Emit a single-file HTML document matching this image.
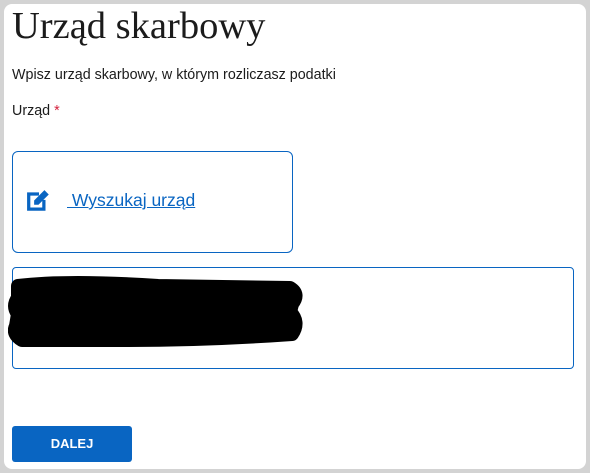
<!DOCTYPE html>
<html><head><meta charset="utf-8"><style>
html,body{margin:0;padding:0;width:590px;height:473px;background:#d3d3d3;overflow:hidden}
.p{position:absolute;left:4px;top:4px;width:582px;height:465px;background:#fff;border-radius:8px}
.a{position:absolute}
h1{position:absolute;left:12px;top:4px;margin:0;font:400 38.5px "Liberation Serif",serif;color:#1b1b1b;white-space:nowrap}
.t{font:14.3px "Liberation Sans",sans-serif;color:#1b1b1b;white-space:nowrap}
</style></head><body>
<div class="p"></div>
<h1>Urząd skarbowy</h1>
<div class="a t" style="left:12px;top:67px">Wpisz urząd skarbowy, w którym rozliczasz podatki</div>
<div class="a t" style="left:12px;top:103px">Urząd <span style="color:#d4213d">*</span></div>
<div class="a" style="left:12px;top:151px;width:279px;height:100px;border:1px solid #0965c2;border-radius:6px"></div>
<svg class="a" style="left:26px;top:189px" width="26" height="24" viewBox="0 0 24 22">
<path d="M1 3h11v3H4v11h11v-7h3V20H1z" fill="#0965c2"/>
<path d="M7.5 14.5V10.5L17 1l4 4-9.5 9.5z" fill="#0965c2"/>
</svg>
<div class="a" style="left:67px;top:190px;font:17.5px 'Liberation Sans',sans-serif;color:#0965c2;text-decoration:underline;white-space:nowrap">&nbsp;Wyszukaj urząd</div>
<div class="a" style="left:12px;top:267px;width:560px;height:100px;border:1px solid #0965c2;border-radius:4px"></div>
<svg class="a" style="left:8px;top:276px" width="300" height="80"><path d="M10 10 Q60 4 150 10 L282 12 Q292 18 284 28 L282 36 Q292 46 284 58 Q200 64 120 64 L14 64 Q4 58 8 50 L10 38 Q4 30 10 22 Z" fill="#000" stroke="#000" stroke-width="14" stroke-linejoin="round"/></svg>
<div class="a" style="left:12px;top:426px;width:120px;height:36px;background:#0965c2;border-radius:3px;color:#fff;font:700 13px 'Liberation Sans',sans-serif;text-align:center;line-height:36px">DALEJ</div>
</body></html>
